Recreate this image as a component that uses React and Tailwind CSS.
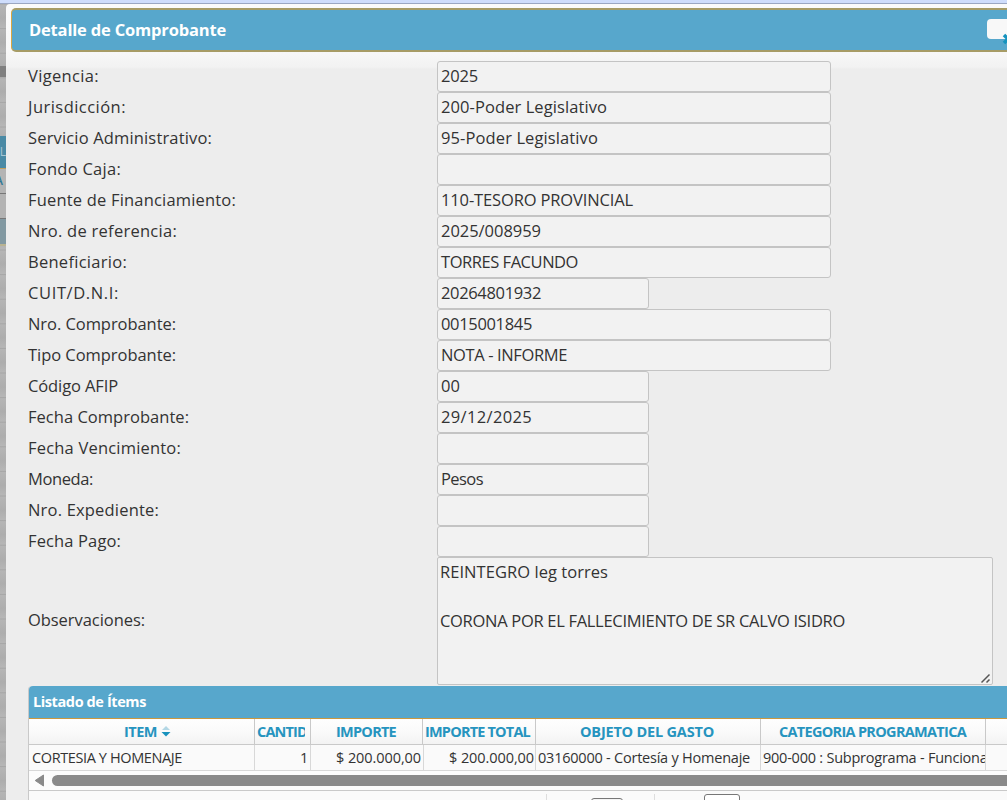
import { useLayoutEffect, useRef } from "react";

const fields = [
  ["Vigencia:", 71, "2025", 37],
  ["Jurisdicción:", 98, "200-Poder Legislativo", 166],
  ["Servicio Administrativo:", 184, "95-Poder Legislativo", 157],
  ["Fondo Caja:", 93, "", 0],
  ["Fuente de Financiamiento:", 208, "110-TESORO PROVINCIAL", 192],
  ["Nro. de referencia:", 149, "2025/008959", 100],
  ["Beneficiario:", 99, "TORRES FACUNDO", 137],
  ["CUIT/D.N.I:", 91, "20264801932", 100, true],
  ["Nro. Comprobante:", 148, "0015001845", 91],
  ["Tipo Comprobante:", 148, "NOTA - INFORME", 126],
  ["Código AFIP", 90, "00", 19, true],
  ["Fecha Comprobante:", 161, "29/12/2025", 91, true],
  ["Fecha Vencimiento:", 153, "", 0, true],
  ["Moneda:", 65, "Pesos", 42, true],
  ["Nro. Expediente:", 131, "", 0, true],
  ["Fecha Pago:", 93, "", 0, true],
];

// Spreads the letters of a text so that it fills the given width.
function Fit({ w, children, className = "" }) {
  const ref = useRef(null);
  useLayoutEffect(() => {
    const el = ref.current;
    el.style.letterSpacing = "0px";
    const natural = el.getBoundingClientRect().width;
    el.style.letterSpacing = `${(w - natural) / children.length}px`;
  }, [w, children]);
  return (
    <span ref={ref} className={`inline-block shrink-0 whitespace-pre ${className}`}>
      {children}
    </span>
  );
}

function Field({ label, labelWidth, value, valueWidth, short }) {
  return (
    <div className="flex h-[31px] items-center">
      <div className="w-[409px] shrink-0">
        <Fit w={labelWidth}>{label}</Fit>
      </div>
      <div
        className={`flex h-[31px] items-center rounded-[3px] border border-[#c4c4c4] bg-[#f2f2f2] pl-[3px] ${
          short ? "w-[212px]" : "w-[394px]"
        }`}
      >
        {value && <Fit w={valueWidth}>{value}</Fit>}
      </div>
    </div>
  );
}

function HeadCell({ className, children }) {
  return (
    <div className={`flex shrink-0 items-center overflow-hidden border-r border-[#c9c9c9] pt-px ${className}`}>
      {children}
    </div>
  );
}

function Cell({ className, children }) {
  return (
    <div className={`flex shrink-0 items-center overflow-hidden border-r border-[#d8d8d8] pt-[2px] ${className}`}>
      {children}
    </div>
  );
}

function Backdrop() {
  return (
    <div className="flex w-[6px] shrink-0 flex-col overflow-hidden bg-[repeating-linear-gradient(180deg,#a6a6a6_0px,#b5b5b5_1px,#adadad_14px,#b6b6b6_23.6px,#a6a6a6_24.6px)]">
      <div className="mt-[62px] h-[11px] shrink-0 bg-[#808080]" />
      <div className="mt-[59px] flex h-[32px] shrink-0 items-center justify-end bg-[#4a8aa5] text-[12px] text-[#a8c6d3]">
        <span>SL</span>
      </div>
      <div className="flex h-[26px] shrink-0 items-center justify-end border-t border-b border-t-[#c2a060] border-b-[#777777] bg-[#b4b4b4] pr-[3px] text-[12px] font-semibold text-[#2d7796]">
        <span>A</span>
      </div>
      <div className="h-[25px] shrink-0 border-b border-[#777777] bg-[#b3b3b3]" />
      <div className="h-[27px] shrink-0 border-b-2 border-[#b9b391] bg-[#8299a2]" />
    </div>
  );
}

export default function App() {
  return (
    <div className="flex h-[800px] w-[1007px] flex-col overflow-hidden bg-[#b0b0b0] font-['Open_Sans','Noto_Sans',sans-serif] text-[16.5px] leading-[24.5px] font-[450] text-[#333333]">
      <div className="h-[4px] shrink-0 border-b border-[#9ba7c2] bg-[#cfddfb]" />
      <div className="flex min-h-0 flex-1">
        <Backdrop />
        <div className="flex min-w-0 flex-1 flex-col rounded-tl-[4px] bg-[#ededed] bg-[linear-gradient(180deg,#fbfbfb_0px,#f8f8f8_48px,#f2f2f2_63px,#ededed_65px)] pt-1 pl-[5px]">
          <header className="flex h-[44px] w-[1010px] shrink-0 items-center rounded-l-[5px] border-2 border-l border-[#a79c66] border-l-[#d9a743] bg-[#57a7cc] pl-[17px] text-[16.5px] font-bold text-white">
            <Fit w={197}>Detalle de Comprobante</Fit>
            <div className="relative mb-[3px] ml-[761px] h-[20px] w-[40px] shrink-0 rounded-[4px] bg-[#f8f8f8]">
              <svg className="absolute top-[14px] left-[15px]" width="12" height="12" viewBox="0 0 12 12">
                <path d="M2 2 L10 10 M10 2 L2 10" stroke="#1593be" strokeWidth="3.5" />
              </svg>
            </div>
          </header>

          <main className="flex min-h-0 flex-1 flex-col pt-[9px] pl-[17px]">
            {fields.map(([label, labelWidth, value, valueWidth, short]) => (
              <Field
                key={label}
                label={label}
                labelWidth={labelWidth}
                value={value}
                valueWidth={valueWidth}
                short={short}
              />
            ))}
            <div className="flex h-[129px] shrink-0 items-center">
              <div className="w-[409px] shrink-0 pb-[2px]">
                <Fit w={117}>Observaciones:</Fit>
              </div>
              <div className="relative -mt-px flex h-[128px] w-[556px] shrink-0 flex-col rounded-[2px] border border-[#c4c4c4] bg-[#f2f2f2] pt-[2px] pl-[2px]">
                <Fit w={168} className="self-start">REINTEGRO leg torres</Fit>
                <Fit w={405} className="mt-[24.5px] self-start">CORONA POR EL FALLECIMIENTO DE SR CALVO ISIDRO</Fit>
                <svg className="absolute right-0 bottom-0" width="12" height="12" viewBox="0 0 12 12">
                  <path d="M1.5 10.5 L9.5 2.5 M6.5 10.5 L9.5 7.5" stroke="#555" strokeWidth="1.5" />
                </svg>
              </div>
            </div>

            <section className="flex w-[1000px] min-h-0 flex-1 flex-col rounded-tl-[4px] border-l border-[#c9c9c9] bg-[#fafafa]">
              <div className="flex h-[33px] shrink-0 items-center rounded-tl-[4px] border-b border-[#c9983f] bg-[#57a7cc] pl-[4px] text-[14.5px] font-bold text-white">
                <Fit w={113}>Listado de Ítems</Fit>
              </div>
              <div className="flex h-[26px] shrink-0 border-b border-[#c9c9c9] bg-[linear-gradient(180deg,#fefefe,#fafafa_50%,#f3f3f3)] text-[14.5px] font-bold text-[#2694bf]">
                <HeadCell className="w-[226px] pl-[95px]">
                  <Fit w={33}>ITEM</Fit>
                  <svg className="mb-[2px] ml-[4px] shrink-0" width="10" height="12" viewBox="0 0 10 12">
                    <path d="M1 5 L5 1 L9 5 Z" fill="#b3d7e5" />
                    <path d="M0.5 7 L9.5 7 L5 11.5 Z" fill="#1992bd" />
                  </svg>
                </HeadCell>
                <HeadCell className="w-[56px] pl-[2px]">
                  <div className="w-[48px] shrink-0 overflow-hidden">
                    <Fit w={69}>CANTIDAD</Fit>
                  </div>
                </HeadCell>
                <HeadCell className="w-[112px] pl-[25px]">
                  <Fit w={60}>IMPORTE</Fit>
                </HeadCell>
                <HeadCell className="w-[113px] pl-[2px]">
                  <Fit w={105}>IMPORTE TOTAL</Fit>
                </HeadCell>
                <HeadCell className="w-[225px] pl-[44px]">
                  <Fit w={134}>OBJETO DEL GASTO</Fit>
                </HeadCell>
                <HeadCell className="w-[225px] pl-[18px]">
                  <Fit w={187}>CATEGORIA PROGRAMATICA</Fit>
                </HeadCell>
              </div>
              <div className="flex h-[26px] shrink-0 border-b border-[#d8d8d8] bg-[#fafafa] text-[14.5px] font-normal">
                <Cell className="w-[226px] pl-[3px]">
                  <Fit w={150}>CORTESIA Y HOMENAJE</Fit>
                </Cell>
                <Cell className="w-[56px] justify-end pr-[2px]">
                  <Fit w={8}>1</Fit>
                </Cell>
                <Cell className="w-[113px] justify-end pr-[2px]">
                  <Fit w={85}>$ 200.000,00</Fit>
                </Cell>
                <Cell className="w-[112px] justify-end pr-[1px]">
                  <Fit w={85}>$ 200.000,00</Fit>
                </Cell>
                <Cell className="w-[225px] pl-[2px]">
                  <Fit w={212}>03160000 - Cortesía y Homenaje</Fit>
                </Cell>
                <Cell className="w-[225px] pl-[2px]">
                  <Fit w={228}>900-000 : Subprograma - Funcional</Fit>
                </Cell>
              </div>
              <div className="flex h-[20px] shrink-0 items-center border-b border-[#c9c9c9] bg-[#fcfcfc] pl-[5px]">
                <svg className="shrink-0" width="11" height="13" viewBox="0 0 11 13">
                  <path d="M1.2 6.5 L9.5 1 V12 Z" fill="#8a8a8a" stroke="#8a8a8a" strokeLinejoin="round" />
                </svg>
                <div className="ml-[7px] h-[11px] w-[990px] shrink-0 rounded-l-full bg-[#8a8a8a]" />
              </div>
              <div className="flex min-h-0 flex-1 items-start overflow-hidden pt-[3px] pl-[517px]">
                <div className="h-[10px] w-px bg-[#dddddd]" />
                <div className="mt-[4px] ml-[44px] h-[20px] w-[32px] rounded-[3px] border border-[#777777] bg-[#f4f4f4]" />
                <div className="ml-[31px] h-[10px] w-px bg-[#dddddd]" />
                <div className="ml-[49px] h-[20px] w-[36px] rounded-[3px] border border-[#777777] bg-white" />
              </div>
            </section>
          </main>
        </div>
      </div>
    </div>
  );
}
